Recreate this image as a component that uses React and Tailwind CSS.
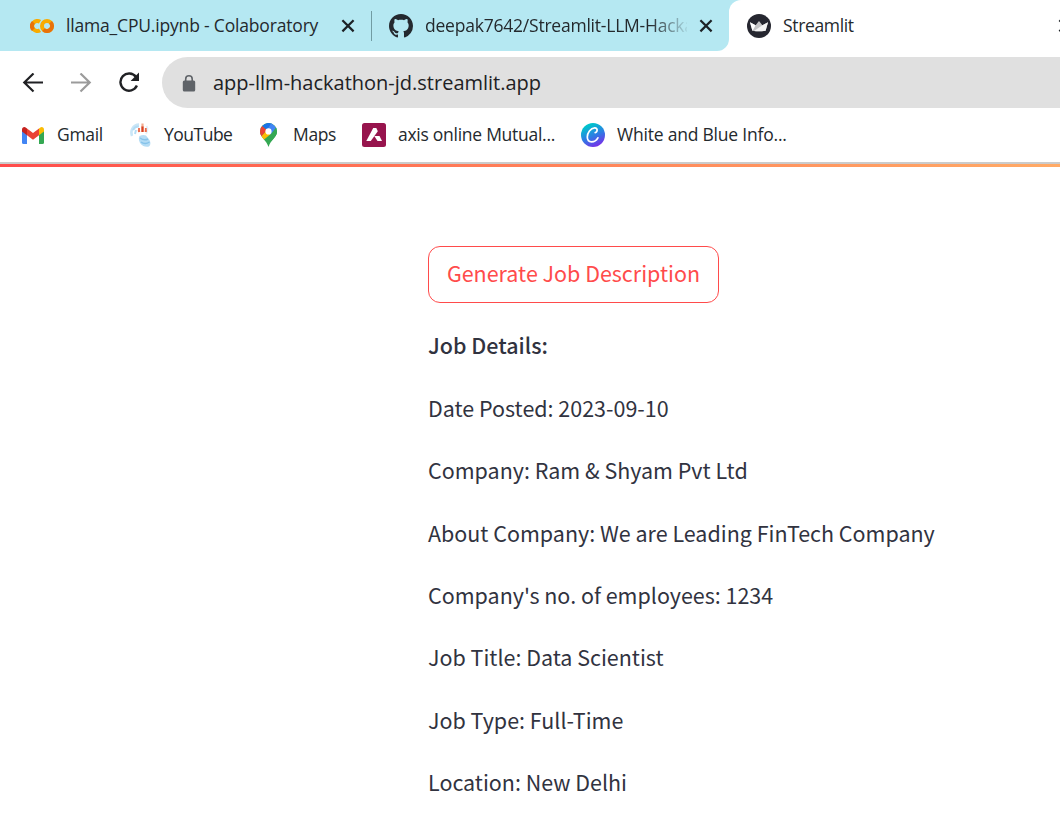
import React from "react";

const ui = "font-['Open_Sans','Noto_Sans',sans-serif]";

function CloseIcon() {
  return (
    <svg width="14" height="14" viewBox="0 0 14 14" className="shrink-0">
      <path d="M1.4 1.2 12.6 12.4M12.6 1.2 1.4 12.4" stroke="#1d2226" strokeWidth="2.2" fill="none" />
    </svg>
  );
}

function ColabIcon() {
  return (
    <svg width="24" height="14" viewBox="0 0 24 14" className="shrink-0" fill="none" strokeWidth="4">
      <path d="M10 2.800A5 5 0 1 0 10 11.200" stroke="#f9ab00" />
      <path d="M3.400 3.400A5 5 0 0 0 3.400 10.600" stroke="#e8710a" />
      <circle cx="17" cy="7" r="5" stroke="#f9ab00" />
      <path d="M20.500 3.400A5 5 0 0 1 13.500 10.600" stroke="#e8710a" />
    </svg>
  );
}

function GithubIcon() {
  return (
    <svg width="24" height="24" viewBox="0 0 16 16" className="shrink-0" fill="#24292f">
      <path d="M8 0C3.58 0 0 3.58 0 8c0 3.54 2.29 6.53 5.47 7.59.4.07.55-.17.55-.38 0-.19-.01-.82-.01-1.49-2.01.37-2.53-.49-2.69-.94-.09-.23-.48-.94-.82-1.13-.28-.15-.68-.52-.01-.53.63-.01 1.08.58 1.23.82.72 1.21 1.87.87 2.33.66.07-.52.28-.87.51-1.07-1.78-.2-3.64-.89-3.64-3.95 0-.87.31-1.59.82-2.15-.08-.2-.36-1.02.08-2.12 0 0 .67-.21 2.2.82.64-.18 1.32-.27 2-.27s1.36.09 2 .27c1.53-1.04 2.2-.82 2.2-.82.44 1.1.16 1.92.08 2.12.51.56.82 1.27.82 2.15 0 3.07-1.87 3.75-3.65 3.95.29.25.54.73.54 1.48 0 1.07-.01 1.93-.01 2.2 0 .21.15.46.55.38A8.01 8.01 0 0 0 16 8c0-4.42-3.58-8-8-8z" />
    </svg>
  );
}

function CrownIcon() {
  return (
    <svg width="24" height="24" viewBox="0 0 24 24" className="shrink-0">
      <circle cx="12" cy="12" r="12" fill="#262730" />
      <path d="M3 8.2 8.6 11.2 12 7 15.4 11.2 21 8.2 18.6 16.8Q12 17.8 5.4 16.8Z" fill="#c4c4c6" />
      <path d="M3 8.2 8.6 11.2 5.8 16.6 5.4 16.8Z" fill="#fff" />
      <path d="M21 8.2 15.4 11.2 7 17Q14 17.5 18.6 16.8Z" fill="#f4f4f4" />
    </svg>
  );
}

function GmailIcon() {
  return (
    <svg width="22" height="17" viewBox="0 0 22 17" className="shrink-0">
      <path d="M0 3v12.5Q0 17 1.5 17H5V6.5Z" fill="#4285f4" />
      <path d="M22 3v12.5q0 1.500-1.500 1.500H17V6.500Z" fill="#34a853" />
      <path d="M5 1.500 11 6 17 1.500V8.300L11 12.800 5 8.300Z" fill="#ea4335" />
      <path d="M0 2.500C0 .3 2.300-.6 4 .7L5 1.500V8.300L0 4.500Z" fill="#c5221f" />
      <path d="M22 2.500C22 .3 19.700-.6 18 .7L17 1.500V8.300L22 4.500Z" fill="#fbbc04" />
    </svg>
  );
}

function FigureIcon() {
  return (
    <svg width="24" height="26" viewBox="0 0 24 26" className="shrink-0" fill="none">
      <path d="M3 14C1 9 4 2.500 10 2.500" stroke="#c9e6f7" strokeWidth="2.500" />
      <path d="M4 8Q6 4 10 4.500M6 12 7 8" stroke="#b4dcf4" strokeWidth="2" />
      <path d="M17.500 4C19 6 18.500 10 17 12" stroke="#e4f1f9" strokeWidth="2" />
      <path d="M9.500 8 10.500 10M13.500 1.500V5M17 8 16.500 10" stroke="#f2ad92" strokeWidth="2.200" />
      <path d="M13.500 4.500V10" stroke="#d9411f" strokeWidth="2.400" />
      <path d="M10 6V10M16.800 6V10" stroke="#ea6a4c" strokeWidth="1.800" />
      <path d="M10.500 14Q14 12.500 17 13.500L20.500 18Q22.500 22 20 24.500 15 26 11 21Q9 17 10.500 14Z" fill="#b4dcf5" />
      <path d="M11 16Q15 19 19 17M12 20Q16 23 20.500 20" stroke="#86c3ea" strokeWidth="1.500" />
    </svg>
  );
}

function MapsIcon() {
  return (
    <svg width="17" height="24" viewBox="0 0 17 24" className="shrink-0">
      <defs>
        <clipPath id="pin">
          <path d="M8.500 0A8.300 8.300 0 0 0 0 8.400C0 14.500 6.600 17 8.500 24 10.400 17 17 14.500 17 8.400A8.300 8.300 0 0 0 8.500 0Z" />
        </clipPath>
      </defs>
      <g clipPath="url(#pin)">
        <path d="M0 0H17V24H0Z" fill="#34a853" />
        <path d="M1.200 13.200 8.500 5 17 2 12 10 3.500 17Z" fill="#fbbc04" />
        <path d="M0 2 2 2.800 7 7 1.200 13.400 0 14Z" fill="#ea4335" />
        <path d="M2 2.800 7 7 12.500 0.500 8 -1Z" fill="#1a73e8" />
        <path d="M11.500 0 17 5 11 11.500 6 8.200Z" fill="#4285f4" />
        <path d="M16 4.500 17 4V12L10 19 6 17.500 11 11Z" fill="#34a853" />
      </g>
      <circle cx="8.500" cy="8.400" r="3.100" fill="#fff" />
    </svg>
  );
}

function AxisIcon() {
  return (
    <svg width="24" height="24" viewBox="0 0 24 24" className="shrink-0">
      <rect width="24" height="24" rx="2.500" fill="#97144d" />
      <path d="M11.200 5H14.300L15.800 8.200 8.800 18H4.300Z" fill="#fff" />
      <path d="M12.300 13H17.500L20 18H15.500Z" fill="#fff" />
    </svg>
  );
}

function CanvaIcon() {
  return (
    <svg width="24" height="24" viewBox="0 0 24 24" className="shrink-0">
      <defs>
        <linearGradient id="canva" x1="0.250" y1="0" x2="0.700" y2="1">
          <stop offset="0.100" stopColor="#00c4cc" />
          <stop offset="0.550" stopColor="#2e7be4" />
          <stop offset="1" stopColor="#7d2ae8" />
        </linearGradient>
      </defs>
      <circle cx="12" cy="12" r="12" fill="url(#canva)" />
      <path d="M14.200 9.600C16.500 9.300 17.200 4.800 13.700 4.900 9.500 5 6.300 10 6.300 14 6.300 17 8 18.800 10.600 18.800 13.300 18.800 15.700 17 16.900 14.800" fill="none" stroke="#fff" strokeWidth="1.700" strokeLinecap="round" />
    </svg>
  );
}

function TabStrip() {
  return (
    <div className="flex h-[51px] bg-[#b5e8f2]">
      <div className="flex w-[371px] shrink-0 items-center pl-[30px]">
        <ColabIcon />
        <span className="ml-3 w-[264px] shrink-0 tracking-[-0.18px]">llama_CPU.ipynb - Colaboratory</span>
        <span className="ml-[11px] flex"><CloseIcon /></span>
      </div>
      <div className="my-auto h-[30px] w-px shrink-0 bg-[#719ca3]" />
      <div className="flex w-[357px] shrink-0 items-center pl-[17px]">
        <GithubIcon />
        <span className="ml-3 w-[262px] shrink-0 tracking-[-0.22px] [mask-image:linear-gradient(90deg,#000_225px,transparent_265px)]">
          deepak7642/Streamlit-LLM-Hacka
        </span>
        <span className="ml-[12px] flex"><CloseIcon /></span>
      </div>
      <div className="flex w-[331px] shrink-0 items-center overflow-hidden rounded-tl-[12px] bg-white pl-[18px]">
        <CrownIcon />
        <span className="ml-3 w-[275px] shrink-0 tracking-[-0.35px]">Streamlit</span>
        <CloseIcon />
      </div>
    </div>
  );
}

function TabCorner() {
  return (
    <svg width="12" height="12" viewBox="0 0 12 12" className="absolute left-[717px] top-[39px]">
      <path d="M12 0V12H0A12 12 0 0 0 12 0Z" fill="#fff" />
    </svg>
  );
}

function Toolbar() {
  return (
    <div className="flex h-[63px] items-center pl-[22px]">
      <svg width="22" height="20" viewBox="0 0 22 20" fill="none" stroke="#202124" strokeWidth="2.200" className="shrink-0">
        <path d="M21 9.500H2.500M11.500 0.500 2.300 9.500 11.500 18.500" />
      </svg>
      <svg width="22" height="20" viewBox="0 0 22 20" fill="none" stroke="#9b9b9b" strokeWidth="2.200" className="ml-[26px] shrink-0">
        <path d="M1 9.500H19.500M10.500 0.500 19.700 9.500 10.500 18.500" />
      </svg>
      <svg width="24" height="22" viewBox="0 0 24 22" fill="none" className="ml-[26px] shrink-0">
        <path d="M18.900 13.600A8.600 8.600 0 1 1 18 5" stroke="#202124" strokeWidth="2.400" />
        <path d="M21 0.500V9H12.600Z" fill="#202124" />
      </svg>
      <div className="ml-[20px] flex h-[51px] grow items-center rounded-l-full bg-[#e0e0e0] pl-5">
        <svg width="14" height="18" viewBox="0 0 14 18" className="shrink-0">
          <rect x="0.800" y="6.500" width="12.400" height="11" rx="1.500" fill="#5f6368" />
          <path d="M3.700 7V5A3.200 3.200 0 0 1 10.200 5V7" fill="none" stroke="#5f6368" strokeWidth="1.600" />
        </svg>
        <span className="ml-[17px] text-[20px] text-[#202124]">app-llm-hackathon-jd.streamlit.app</span>
      </div>
    </div>
  );
}

function Bookmarks() {
  return (
    <div className="flex h-[48px] items-center pb-[6px] pl-[22px]">
      <GmailIcon />
      <span className="mb-px ml-[13px] w-[72px] tracking-[-0.3px]">Gmail</span>
      <FigureIcon />
      <span className="mb-px ml-[11px] w-[96px] tracking-[-0.5px]">YouTube</span>
      <MapsIcon />
      <span className="mb-px ml-[16px] w-[69px] tracking-[-0.35px]">Maps</span>
      <AxisIcon />
      <span className="mb-px ml-[12px] w-[183px] tracking-[-0.27px]">axis online Mutual...</span>
      <CanvaIcon />
      <span className="mb-px ml-[12px] tracking-[-0.21px]">White and Blue Info...</span>
    </div>
  );
}

const details = [
  "Date Posted: 2023-09-10",
  "Company: Ram & Shyam Pvt Ltd",
  "About Company: We are Leading FinTech Company",
  "Company's no. of employees: 1234",
  "Job Title: Data Scientist",
  "Job Type: Full-Time",
  "Location: New Delhi",
];

export default function App() {
  return (
    <div className="h-[822px] w-[1060px] overflow-hidden bg-white">
      <header className={`${ui} relative whitespace-nowrap text-[17.500px] text-[#24292d]`}>
        <TabStrip />
        <TabCorner />
        <Toolbar />
        <Bookmarks />
        <div className="h-[2px] bg-[#cbcbcb]" />
      </header>
      <div className="h-[3px] bg-linear-to-r from-[#ff4b4b] to-[#ffaa66]" />
      <main className="pl-[428px] pt-[79px] font-['Noto_Sans_CJK_SC',sans-serif] text-[21.470px] leading-[38px] text-[#31333f]">
        <button className="flex h-[57px] w-[291px] items-center justify-center rounded-[12px] border border-[#ff4b4b] pb-[3px] text-[#ff4b4b]">
          Generate Job Description
        </button>
        <p className="mt-[23px] font-medium">Job Details:</p>
        <div className="mt-[24.800px] flex flex-col gap-[24.400px]">
          {details.map((line) => (
            <p key={line}>{line}</p>
          ))}
        </div>
      </main>
    </div>
  );
}
